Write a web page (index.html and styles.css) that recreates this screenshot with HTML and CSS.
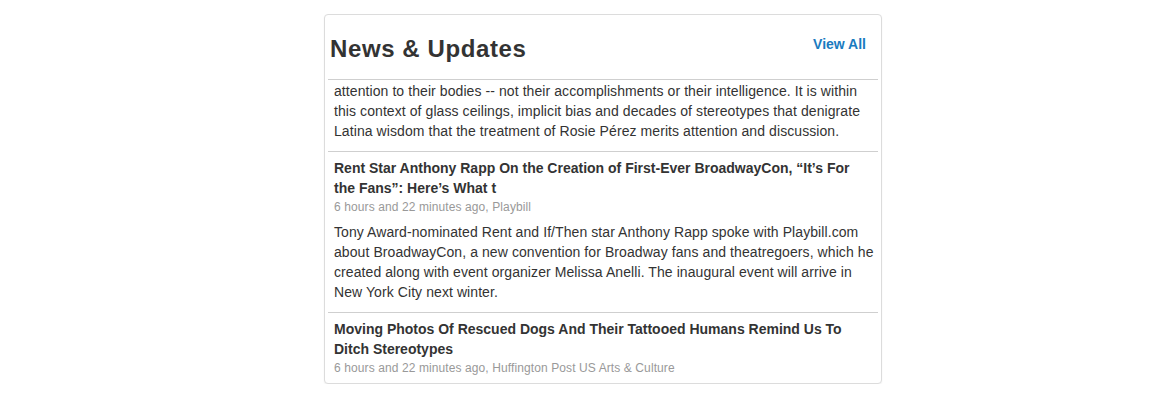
FILE: index.html
```html
<!DOCTYPE html>
<html lang="en">
<head>
<meta charset="utf-8">
<title>News &amp; Updates</title>
<link rel="stylesheet" href="styles.css">
</head>
<body>
<div class="page">
  <section class="card">
    <header class="card-header">
      <h3 class="card-title">News &amp; Updates</h3>
      <a class="view-all" href="#">View All</a>
    </header>
    <div class="news-list">
      <article class="news-item news-item--partial">
        <p class="news-text">attention to their bodies -- not their accomplishments or their intelligence. It is within this context of glass ceilings, implicit bias and decades of stereotypes that denigrate Latina wisdom that the treatment of Rosie Pérez merits attention and discussion.</p>
      </article>
      <article class="news-item">
        <h4 class="news-title">Rent Star Anthony Rapp On the Creation of First-Ever BroadwayCon, “It’s For the Fans”: Here’s What t</h4>
        <div class="news-meta">6 hours and 22 minutes ago, Playbill</div>
        <p class="news-text">Tony Award-nominated Rent and If/Then star Anthony Rapp spoke with Playbill.com about BroadwayCon, a new convention for Broadway fans and theatregoers, which he created along with event organizer Melissa Anelli. The inaugural event will arrive in New York City next winter.</p>
      </article>
      <article class="news-item news-item--last">
        <h4 class="news-title">Moving Photos Of Rescued Dogs And Their Tattooed Humans Remind Us To Ditch Stereotypes</h4>
        <div class="news-meta">6 hours and 22 minutes ago, Huffington Post US Arts &amp; Culture</div>
      </article>
    </div>
  </section>
</div>
</body>
</html>
```
FILE: styles.css
```css
html, body {
  margin: 0;
  padding: 0;
  background: #fff;
}

body {
  font-family: "Liberation Sans", Arial, Helvetica, sans-serif;
  font-size: 14px;
  line-height: 20px;
  color: #333;
}

.page {
  padding: 14px 0 0 324px;
}

.card {
  box-sizing: border-box;
  width: 558px;
  height: 370px;
  border: 1px solid #dcdcdc;
  border-radius: 4px;
  box-shadow: 0 1px 2px rgba(0, 0, 0, 0.06);
  overflow: hidden;
  background: #fff;
}

.card-header {
  box-sizing: border-box;
  height: 64px;
  display: flex;
  justify-content: space-between;
  align-items: flex-start;
  padding: 0 15px 0 5px;
}

.card-title {
  margin: 21px 0 0;
  font-size: 24px;
  line-height: 26px;
  font-weight: bold;
  letter-spacing: 0.6px;
  color: #333;
}

.view-all {
  margin-top: 19px;
  font-size: 14px;
  line-height: 20px;
  font-weight: bold;
  color: #1a7bc0;
  text-decoration: none;
}

.news-list {
  margin: 0 3px 0 3px;
  border-top: 1px solid #cfcfcf;
}

.news-item {
  padding: 6px 3px 0 6px;
  border-top: 1px solid #cfcfcf;
}

.news-item--partial {
  border-top: 0;
  padding-top: 1px;
}

.news-title {
  margin: 0 5px 0 0;
  font-size: 14px;
  line-height: 20px;
  font-weight: bold;
  color: #333;
}

.news-meta {
  font-size: 12px;
  line-height: 19px;
  letter-spacing: 0.1px;
  color: #999;
  margin-bottom: 5px;
}

.news-text {
  margin: 0 0 10px;
  letter-spacing: 0.08px;
}
```
